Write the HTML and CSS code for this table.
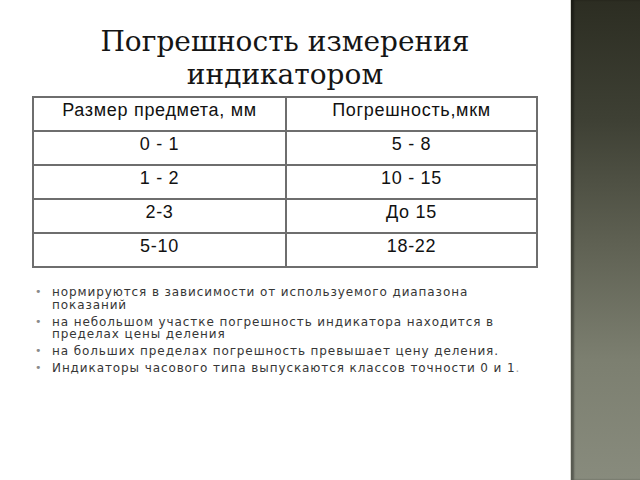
FILE: index.html
```html
<!DOCTYPE html>
<html lang="ru">
<head>
<meta charset="utf-8">
<link rel="stylesheet" href="styles.css">
</head>
<body>
<div class="slide">
  <main class="content">
    <h1 class="title">Погрешность измерения<br>индикатором</h1>
    <table class="grid">
      <tr><td>Размер предмета, мм</td><td>Погрешность,мкм</td></tr>
      <tr><td>0 - 1</td><td>5 - 8</td></tr>
      <tr><td>1 - 2</td><td>10 - 15</td></tr>
      <tr><td>2-3</td><td>До 15</td></tr>
      <tr><td>5-10</td><td>18-22</td></tr>
    </table>
    <ul class="notes">
      <li>нормируются в зависимости от используемого диапазона показаний</li>
      <li>на небольшом участке погрешность индикатора находится в пределах цены деления</li>
      <li>на больших пределах погрешность превышает цену деления.</li>
      <li>Индикаторы часового типа выпускаются классов точности 0 и 1<span class="dot">.</span></li>
    </ul>
  </main>
  <aside class="panel"></aside>
</div>
</body>
</html>
```

FILE: styles.css
```css
html, body {
  margin: 0;
  padding: 0;
  background: #ffffff;
}
.slide {
  width: 640px;
  height: 480px;
  display: flex;
  overflow: hidden;
}
.content {
  width: 570px;
  flex: none;
  display: flex;
  flex-direction: column;
}
.title {
  margin: 25px 0 0 0;
  text-align: center;
  font-family: "DejaVu Serif", serif;
  font-weight: normal;
  font-size: 28px;
  line-height: 33px;
  color: #151515;
  height: 71px;
}
.grid {
  margin: 0 0 0 32px;
  width: 506px;
  border-collapse: collapse;
  table-layout: fixed;
  font-family: "Liberation Sans", Arial, sans-serif;
  font-size: 18px;
  letter-spacing: 0.7px;
  color: #111111;
}
.grid td {
  border: 2px solid #6e6e6e;
  height: 34px;
  padding: 2px 0 0 0;
  box-sizing: border-box;
  text-align: center;
  vertical-align: top;
  line-height: 20px;
}
.grid td:first-child {
  width: 253px;
}
.notes {
  list-style: none;
  margin: 18px 0 0 0;
  padding: 0 0 0 32px;
  font-family: "DejaVu Sans", sans-serif;
  font-size: 12px;
  letter-spacing: 0.9px;
  line-height: 12.5px;
  color: #363636;
}
.notes li {
  position: relative;
  padding-left: 20px;
  margin-bottom: 4.5px;
  width: 480px;
}
.notes li::before {
  content: "•";
  position: absolute;
  left: 3px;
  top: 0;
  color: #8a8a8a;
  font-size: 11px;
}
.dot {
  color: #aaaaaa;
}
.panel {
  flex: 1;
  border-left: 1px solid #d8d8d0;
  box-shadow: inset 3px 0 2px rgba(0,0,0,0.35);
  background: linear-gradient(to bottom, #2c2d22 0%, #3e4034 25%, #5e6052 50%, #7c7f70 75%, #888b7d 100%);
}
```
